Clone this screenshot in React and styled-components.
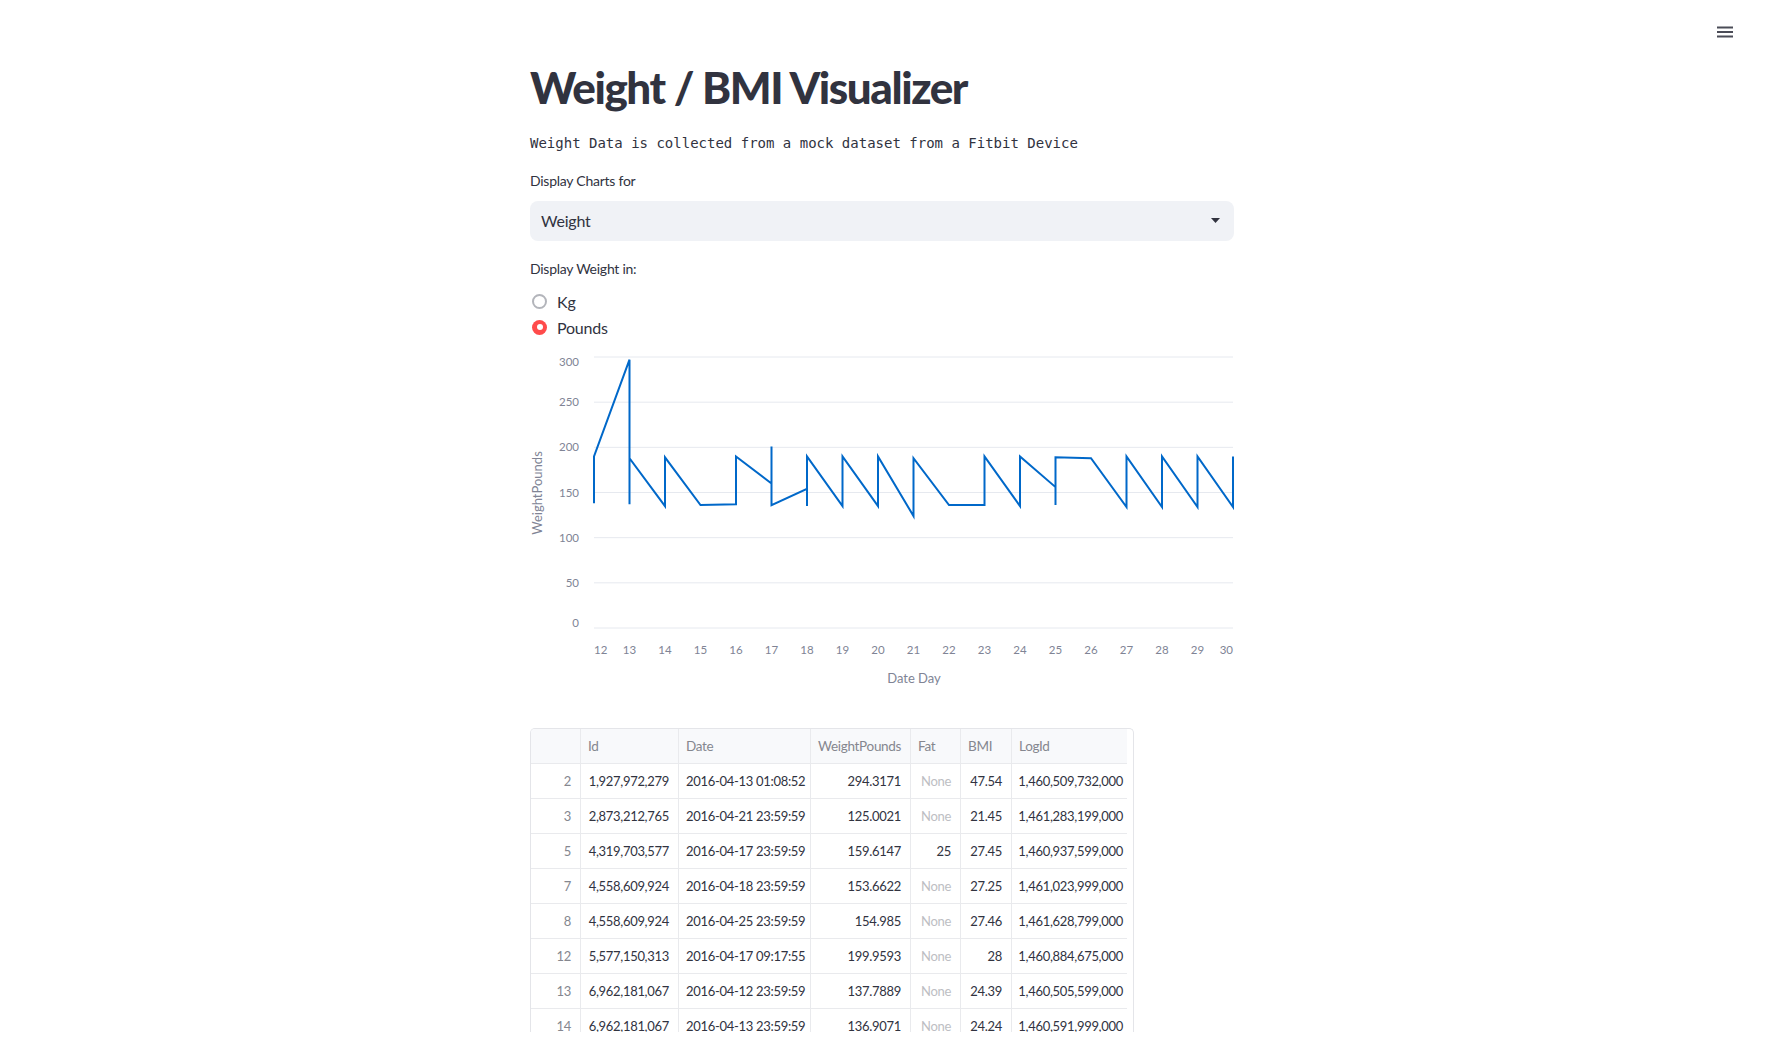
import React from "react";
import styled, { createGlobalStyle } from "styled-components";

const GlobalStyle = createGlobalStyle`
  html, body { margin: 0; padding: 0; background: #ffffff; overflow: hidden; }
  body {
    font-family: Lato, "Noto Sans", sans-serif;
    color: #31333f;
    -webkit-font-smoothing: antialiased;
  }
`;

const Page = styled.div`
  position: relative;
  height: 1053px;
  padding-right: 13px;
  box-sizing: border-box;
`;

const TopBar = styled.header`
  position: absolute;
  top: 0;
  left: 0;
  right: 0;
  height: 60px;
  display: flex;
  justify-content: flex-end;
  align-items: flex-start;
  padding: 20px 40px 0 0;
  box-sizing: border-box;
`;

const MenuButton = styled.button`
  width: 24px;
  height: 24px;
  padding: 0;
  border: none;
  background: transparent;
  display: flex;
  align-items: center;
  justify-content: center;
  color: #4a4c57;
`;

const Main = styled.main`
  width: 704px;
  margin: 0 auto;
  padding-top: 61px;
  display: flex;
  flex-direction: column;
`;

const Title = styled.h1`
  margin: 0;
  height: 52px;
  font-size: 44px;
  line-height: 52px;
  font-weight: 900;
  color: #31333f;
  letter-spacing: -1.45px;
  white-space: nowrap;
`;

const Subtitle = styled.p`
  margin: 20px 0 0;
  font-family: "DejaVu Sans Mono", "Liberation Mono", monospace;
  font-size: 14px;
  line-height: 21px;
  color: #31333f;
`;

const FieldLabel = styled.label`
  margin-top: ${(p) => p.$gap}px;
  font-size: 14px;
  line-height: 20px;
  height: 20px;
  color: #31333f;
  letter-spacing: -0.25px;
`;

const SelectBox = styled.div`
  margin-top: 10px;
  height: 40px;
  box-sizing: border-box;
  background: #f0f2f6;
  border-radius: 8px;
  display: flex;
  align-items: center;
  justify-content: space-between;
  padding: 0 14px 2px 11px;
  font-size: 16px;
  color: #31333f;
  letter-spacing: -0.2px;
`;

const RadioGroup = styled.div`
  margin-top: 10px;
  display: flex;
  flex-direction: column;
  gap: 2px;
`;

const RadioRow = styled.div`
  height: 24px;
  display: flex;
  align-items: center;
  gap: 10px;
  font-size: 16px;
  color: #31333f;
  letter-spacing: -0.2px;
`;

const RadioDot = styled.span`
  box-sizing: border-box;
  width: 15px;
  height: 15px;
  margin-left: 2px;
  border-radius: 50%;
  display: flex;
  align-items: center;
  justify-content: center;
  border: ${(p) => (p.$checked ? "none" : "2px solid #b3b5bb")};
  background: ${(p) => (p.$checked ? "#ff4b4b" : "#ffffff")};
  &::after {
    content: "";
    display: ${(p) => (p.$checked ? "block" : "none")};
    width: 6px;
    height: 6px;
    border-radius: 50%;
    background: #ffffff;
  }
`;

const ChartFrame = styled.div`
  margin-top: 6px;
  height: 350px;
`;

const TickLabel = styled.text`
  fill: #808495;
  font-size: 11.5px;
  font-family: Lato, "Noto Sans", sans-serif;
`;

const AxisTitle = styled.text`
  fill: #808495;
  font-size: 13px;
  font-family: Lato, "Noto Sans", sans-serif;
`;

const TableWrap = styled.div`
  margin-top: 33px;
  width: 604px;
  height: 304px;
  box-sizing: border-box;
  border: 1px solid #e4e5e9;
  border-bottom: none;
  border-radius: 5px 5px 0 0;
  overflow: hidden;
`;

const Grid = styled.div`
  display: grid;
  grid-template-columns: 50px 98px 132px 100px 50px 51px 115px;
  width: 596px;
`;

const Cell = styled.div`
  box-sizing: border-box;
  height: 35px;
  display: flex;
  align-items: center;
  justify-content: ${(p) => (p.$align === "right" ? "flex-end" : "flex-start")};
  padding: ${(p) =>
    p.$last && !p.$head ? "0 4px 0 4px" : p.$align === "right" ? "0 9px 0 6px" : "0 6px 0 7px"};
  border-bottom: 1px solid #e9eaed;
  border-right: ${(p) => (p.$last ? "none" : "1px solid #e9eaed")};
  background: ${(p) => (p.$head ? "#f8f9fb" : "#ffffff")};
  color: ${(p) =>
    p.$tone === "muted" ? "#85878f" : p.$tone === "faint" ? "#bdbec3" : "#31333f"};
  white-space: nowrap;
  letter-spacing: -0.3px;
  font-size: ${(p) => (p.$head ? "13.5px" : "13px")};
`;

const points = [
  [12, 138], [12, 190], [13, 297], [13, 137], [13, 188], [14, 135], [14, 189],
  [15, 136], [16, 137], [16, 190], [17, 160], [17, 201], [17, 136], [18, 154],
  [18, 135], [18, 190], [19, 135], [19, 190], [20, 135], [20, 190], [21, 124],
  [21, 188], [22, 136], [23, 136], [23, 190], [24, 135], [24, 190], [25, 156],
  [25, 136], [25, 189], [26, 188], [27, 134], [27, 190], [28, 134], [28, 190],
  [29, 134], [29, 190], [30, 134], [30, 190],
];

const xOf = (d) => 64 + (d - 12) * 35.5;
const yOf = (v) => 283 - v * 0.90333;

const WeightChart = () => {
  const days = Array.from({ length: 19 }, (_, i) => 12 + i);
  const ticks = [0, 50, 100, 150, 200, 250, 300];
  const d = points
    .map(([day, v], i) => `${i ? "L" : "M"}${xOf(day).toFixed(1)} ${yOf(v).toFixed(1)}`)
    .join(" ");
  return (
    <svg width="704" height="350" viewBox="0 0 704 350">
      {ticks.map((t) => (
        <line key={t} x1="64" x2="703" y1={yOf(t)} y2={yOf(t)} stroke="#e6e9ef" strokeWidth="1" />
      ))}
      {ticks.map((t) => {
        const c = yOf(t) + (t === 300 ? 5 : t === 0 ? -5 : 0);
        return (
          <TickLabel key={t} x="49" y={c + 4} textAnchor="end">
            {t}
          </TickLabel>
        );
      })}
      {days.map((day) => (
        <TickLabel
          key={day}
          x={day === 12 ? 64 : day === 30 ? 703 : xOf(day)}
          y="309"
          textAnchor={day === 12 ? "start" : day === 30 ? "end" : "middle"}
        >
          {day}
        </TickLabel>
      ))}
      <AxisTitle x="384" y="338" textAnchor="middle">
        Date Day
      </AxisTitle>
      <AxisTitle x="12" y="148" textAnchor="middle" transform="rotate(-90 12 148)">
        WeightPounds
      </AxisTitle>
      <path d={d} fill="none" stroke="#0068c9" strokeWidth="2" strokeLinejoin="miter" />
    </svg>
  );
};

const columns = [
  { key: "idx", label: "", align: "right" },
  { key: "id", label: "Id", align: "right" },
  { key: "date", label: "Date", align: "left" },
  { key: "w", label: "WeightPounds", align: "right" },
  { key: "fat", label: "Fat", align: "right" },
  { key: "bmi", label: "BMI", align: "right" },
  { key: "log", label: "LogId", align: "right" },
];

const rows = [
  ["2", "1,927,972,279", "2016-04-13 01:08:52", "294.3171", "None", "47.54", "1,460,509,732,000"],
  ["3", "2,873,212,765", "2016-04-21 23:59:59", "125.0021", "None", "21.45", "1,461,283,199,000"],
  ["5", "4,319,703,577", "2016-04-17 23:59:59", "159.6147", "25", "27.45", "1,460,937,599,000"],
  ["7", "4,558,609,924", "2016-04-18 23:59:59", "153.6622", "None", "27.25", "1,461,023,999,000"],
  ["8", "4,558,609,924", "2016-04-25 23:59:59", "154.985", "None", "27.46", "1,461,628,799,000"],
  ["12", "5,577,150,313", "2016-04-17 09:17:55", "199.9593", "None", "28", "1,460,884,675,000"],
  ["13", "6,962,181,067", "2016-04-12 23:59:59", "137.7889", "None", "24.39", "1,460,505,599,000"],
  ["14", "6,962,181,067", "2016-04-13 23:59:59", "136.9071", "None", "24.24", "1,460,591,999,000"],
];

const DataTable = () => (
  <TableWrap>
    <Grid>
      {columns.map((c, i) => (
        <Cell key={c.key} $head $tone="muted" $last={i === columns.length - 1}>
          {c.label}
        </Cell>
      ))}
      {rows.map((r) =>
        r.map((v, i) => (
          <Cell
            key={r[0] + "-" + i}
            $align={columns[i].align}
            $last={i === columns.length - 1}
            $tone={i === 0 ? "muted" : v === "None" ? "faint" : "normal"}
          >
            {v}
          </Cell>
        ))
      )}
    </Grid>
  </TableWrap>
);

export default function App() {
  return (
    <Page>
      <GlobalStyle />
      <TopBar>
        <MenuButton aria-label="Main menu">
          <svg width="24" height="24" viewBox="0 0 24 24">
            <path d="M4 7.5h16M4 12h16M4 16.5h16" stroke="currentColor" strokeWidth="1.8" />
          </svg>
        </MenuButton>
      </TopBar>
      <Main>
        <Title>Weight / BMI Visualizer</Title>
        <Subtitle>Weight Data is collected from a mock dataset from a Fitbit Device</Subtitle>
        <FieldLabel $gap={17}>Display Charts for</FieldLabel>
        <SelectBox>
          <span>Weight</span>
          <svg width="9" height="5" viewBox="0 0 9 5">
            <path d="M0 0H9L4.5 5Z" fill="#31333f" />
          </svg>
        </SelectBox>
        <FieldLabel $gap={18}>Display Weight in:</FieldLabel>
        <RadioGroup>
          <RadioRow>
            <RadioDot />
            Kg
          </RadioRow>
          <RadioRow>
            <RadioDot $checked />
            Pounds
          </RadioRow>
        </RadioGroup>
        <ChartFrame>
          <WeightChart />
        </ChartFrame>
        <DataTable />
      </Main>
    </Page>
  );
}
